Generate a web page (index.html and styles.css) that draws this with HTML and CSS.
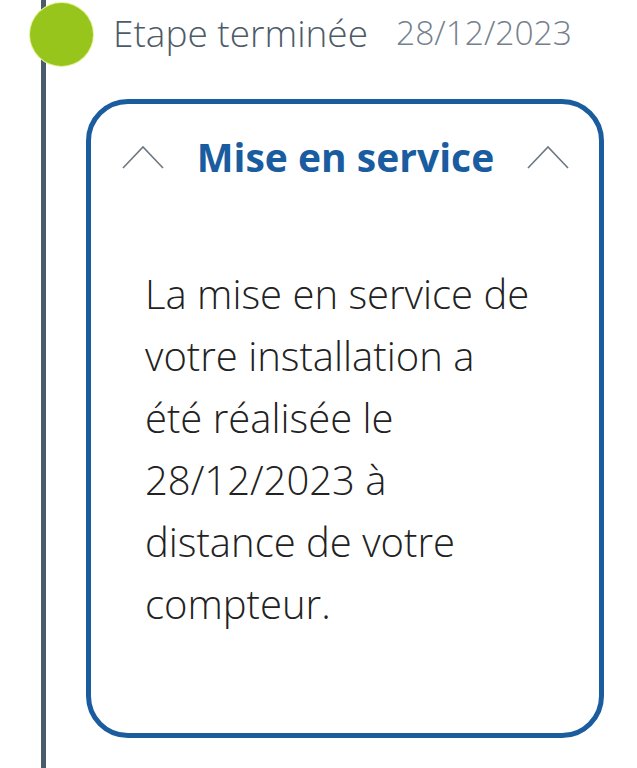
FILE: index.html
```html
<!DOCTYPE html>
<html lang="fr">
<head>
<meta charset="utf-8">
<title>Mise en service</title>
<link rel="stylesheet" href="styles.css">
</head>
<body>
<div class="timeline">
  <div class="step-head">
    <span class="dot"></span>
    <span class="step-label">Etape terminée</span>
    <span class="step-date">28/12/2023</span>
  </div>
  <div class="card">
    <div class="card-head">
      <svg class="chev" width="42" height="24" viewBox="0 0 42 24"><path d="M1 23 L21 2 L41 23" fill="none" stroke="#6e7882" stroke-width="1.6"/></svg>
      <h2 class="card-title">Mise en service</h2>
      <svg class="chev" width="42" height="24" viewBox="0 0 42 24"><path d="M1 23 L21 2 L41 23" fill="none" stroke="#6e7882" stroke-width="1.6"/></svg>
    </div>
    <p class="card-text">La mise en service de<br>votre installation a<br>été réalisée le<br>28/12/2023 à<br>distance de votre<br>compteur.</p>
  </div>
</div>
</body>
</html>
```

FILE: styles.css
```css
html, body {
  margin: 0;
  padding: 0;
  background: #ffffff;
}
body {
  font-family: "Open Sans", "Noto Sans", sans-serif;
  width: 637px;
  height: 768px;
  overflow: hidden;
}
.timeline {
  margin-left: 41px;
  border-left: 5px solid #4a5b69;
  min-height: 768px;
}
.step-head {
  position: relative;
  display: flex;
  align-items: center;
  height: 64px;
  padding-bottom: 6px;
  padding-left: 67px;
  gap: 28px;
}
.dot {
  position: absolute;
  left: -16px;
  top: 3px;
  width: 63px;
  height: 63px;
  border-radius: 50%;
  background: #97c51b;
  box-shadow: 0 0 0 1px #e4f2a0;
}
.step-label {
  font-size: 37px;
  font-weight: 300;
  color: #4d5b68;
}
.step-date {
  font-size: 33.5px;
  font-weight: 300;
  color: #74818d;
}
.card {
  margin-top: 29px;
  margin-left: 40px;
  width: 518px;
  height: 639px;
  box-sizing: border-box;
  border: 5px solid #1a5c9e;
  border-radius: 42px;
  padding: 26px 30px 0 31px;
}
.card-head {
  display: flex;
  align-items: center;
  justify-content: space-between;
}
.card-title {
  margin: 0;
  font-size: 39px;
  font-weight: 700;
  color: #1a5ca0;
}
.card-text {
  margin: 80px 0 0 23px;
  font-size: 40px;
  font-weight: 300;
  line-height: 62px;
  color: #222222;
}
```
